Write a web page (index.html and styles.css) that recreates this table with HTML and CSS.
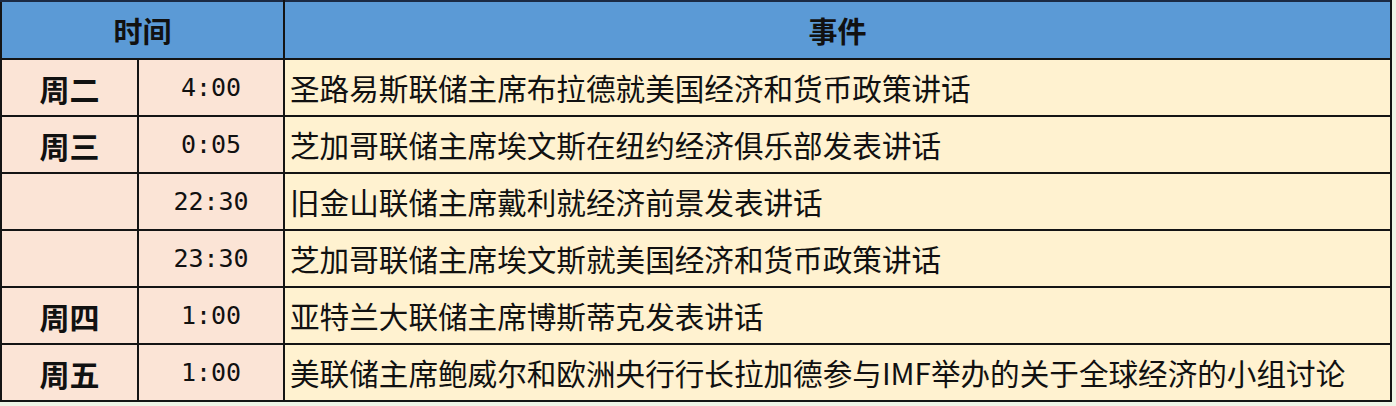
FILE: index.html
```html
<!DOCTYPE html>
<html lang="zh">
<head>
<meta charset="utf-8">
<link rel="stylesheet" href="styles.css">
</head>
<body>
<table class="sched">
  <colgroup>
    <col class="c-day">
    <col class="c-time">
    <col class="c-event">
  </colgroup>
  <thead>
    <tr><th colspan="2">时间</th><th>事件</th></tr>
  </thead>
  <tbody>
    <tr><td class="day">周二</td><td class="time">4:00</td><td class="event">圣路易斯联储主席布拉德就美国经济和货币政策讲话</td></tr>
    <tr><td class="day">周三</td><td class="time">0:05</td><td class="event">芝加哥联储主席埃文斯在纽约经济俱乐部发表讲话</td></tr>
    <tr><td class="day"></td><td class="time">22:30</td><td class="event">旧金山联储主席戴利就经济前景发表讲话</td></tr>
    <tr><td class="day"></td><td class="time">23:30</td><td class="event">芝加哥联储主席埃文斯就美国经济和货币政策讲话</td></tr>
    <tr><td class="day">周四</td><td class="time">1:00</td><td class="event">亚特兰大联储主席博斯蒂克发表讲话</td></tr>
    <tr><td class="day">周五</td><td class="time">1:00</td><td class="event">美联储主席鲍威尔和欧洲央行行长拉加德参与IMF举办的关于全球经济的小组讨论</td></tr>
  </tbody>
</table>
</body>
</html>
```
FILE: styles.css
```css
html, body {
  margin: 0;
  padding: 0;
}
body {
  background: #eef4e6;
  font-family: "Noto Sans CJK SC", "Noto Sans", sans-serif;
  color: #111;
}
.sched {
  border-collapse: collapse;
  width: 1392px;
  table-layout: fixed;
}
.c-day { width: 137px; }
.c-time { width: 146px; }
.sched th, .sched td {
  border: 2px solid #141414;
  padding: 0;
  line-height: 30px;
  vertical-align: middle;
  overflow: hidden;
}
.sched th {
  background: #5b9ad6;
  height: 56px;
  font-size: 29px;
  font-weight: 700;
  text-align: center;
  border-top-color: #1b2a44;
}
.sched td {
  height: 55px;
}
.day {
  background: #fbe4d6;
  text-align: center;
  font-size: 30px;
  font-weight: 700;
}
.time {
  background: #fbe4d6;
  text-align: center;
  font-family: "DejaVu Sans Mono", "Liberation Mono", monospace;
  font-size: 25px;
}
.sched .event {
  background: #fff2d0;
  font-size: 29.6px;
  padding-left: 5px;
  white-space: nowrap;
}
```
